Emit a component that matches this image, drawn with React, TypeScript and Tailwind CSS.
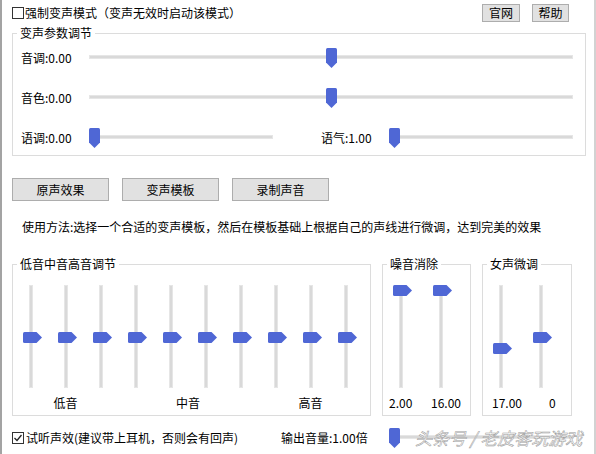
import React from "react";

function HSlider({ className, pos }: { className: string; pos: number }) {
  return (
    <div className={"relative h-[20px] " + className}>
      <div className="absolute left-0 right-0 top-[7px] h-[4px] bg-[#d9d9d9] border border-[#e6e6e6]" />
      <svg
        className="absolute top-0"
        style={{ left: `calc(${pos} * (100% - 11px))` }}
        width="11"
        height="20"
        viewBox="0 0 11 20"
      >
        <path d="M0 1.5 Q0 0 1.5 0 H9.5 Q11 0 11 1.5 V14.5 L5.5 20 L0 14.5 Z" fill="#4f67d5" />
      </svg>
    </div>
  );
}

function VSlider({ width, top }: { width: string; top: number }) {
  return (
    <div className={"relative h-[103px] " + width}>
      <div className="absolute top-0 bottom-0 left-[16px] w-[4px] bg-[#d9d9d9] border border-[#e6e6e6]" />
      <svg
        className="absolute left-[10px]"
        style={{ top }}
        width="19"
        height="11"
        viewBox="0 0 19 11"
      >
        <path d="M0 1.5 Q0 0 1.5 0 H13.5 L19 5.5 L13.5 11 H1.5 Q0 11 0 9.5 Z" fill="#4f67d5" />
      </svg>
    </div>
  );
}

function Group({ title, className, children }: { title: string; className: string; children: React.ReactNode }) {
  return (
    <fieldset className={"border border-[#dcdcdc] p-0 m-0 min-w-0 " + className}>
      <legend className="ml-[4px] px-[3px] text-[12px] leading-[16px]">{title}</legend>
      {children}
    </fieldset>
  );
}

function Btn({ className, children }: { className: string; children: React.ReactNode }) {
  return (
    <div className={"flex items-center justify-center bg-[#e1e1e1] border border-[#adadad] text-[12px] leading-[16px] text-black " + className}>
      {children}
    </div>
  );
}

export default function App() {
  const eq = [47, 47, 47, 47, 47, 47, 47, 47, 47, 47];
  return (
    <div className="w-[596px] h-[454px] bg-white border-l-2 border-l-[#a3a3a3] border-r-2 border-r-[#d2d2d2] relative overflow-hidden font-['Noto_Sans_CJK_SC','Noto_Sans',sans-serif] text-[12px] text-black">
      <div className="pl-[10px]">
        {/* top row */}
        <div className="pt-[4px] flex items-center h-[22px]">
          <div className="w-[12px] h-[12px] border border-[#333333] bg-white" />
          <span className="ml-[1px] leading-[16px]">强制变声模式（变声无效时启动该模式）</span>
          <div className="ml-auto mr-[25px] flex gap-[12px]">
            <Btn className="w-[38px] h-[18px]">官网</Btn>
            <Btn className="w-[37px] h-[18px]">帮助</Btn>
          </div>
        </div>

        {/* param group */}
        <Group title="变声参数调节" className="mt-[3px] w-[574px]">
          <div className="pl-[8px] pr-[11px] pt-[7px] pb-[7px] flex flex-col gap-[20px]">
            <div className="flex items-center">
              <span className="w-[68px] leading-[20px]">音调:0.00</span>
              <HSlider className="w-[484px]" pos={0.5} />
            </div>
            <div className="flex items-center">
              <span className="w-[68px] leading-[20px]">音色:0.00</span>
              <HSlider className="w-[484px]" pos={0.5} />
            </div>
            <div className="flex items-center">
              <span className="w-[68px] leading-[20px]">语调:0.00</span>
              <HSlider className="w-[184px]" pos={0} />
              <span className="ml-[48px] w-[68px] leading-[20px]">语气:1.00</span>
              <HSlider className="w-[184px]" pos={0} />
            </div>
          </div>
        </Group>

        {/* buttons */}
        <div className="mt-[22px] flex gap-[13px]">
          <Btn className="w-[97px] h-[23px]">原声效果</Btn>
          <Btn className="w-[97px] h-[23px]">变声模板</Btn>
          <Btn className="w-[97px] h-[23px]">录制声音</Btn>
        </div>

        <div className="mt-[18px] ml-[10px] leading-[16px]">
          使用方法:选择一个合适的变声模板，然后在模板基础上根据自己的声线进行微调，达到完美的效果
        </div>

        {/* bottom groups */}
        <div className="mt-[21px] flex gap-[11px]">
          <Group title="低音中音高音调节" className="w-[359px]">
            <div className="pt-[13px] pb-[4px]">
              <div className="flex">
                {eq.map((t, i) => (
                  <VSlider key={i} width="w-[35px]" top={t} />
                ))}
              </div>
              <div className="mt-[7px] grid grid-cols-[repeat(10,35px)] leading-[16px]">
                <span className="col-start-2 text-center">低音</span>
                <span className="col-start-5 col-span-2 text-center">中音</span>
                <span className="col-start-9 text-center">高音</span>
              </div>
            </div>
          </Group>

          <Group title="噪音消除" className="w-[89px]">
            <div className="pt-[13px] pb-[4px]">
              <div className="flex">
                <VSlider width="w-[40px]" top={0} />
                <VSlider width="w-[40px]" top={0} />
              </div>
              <div className="mt-[7px] flex leading-[16px]">
                <span className="ml-[6px] w-[42px]">2.00</span>
                <span>16.00</span>
              </div>
            </div>
          </Group>

          <Group title="女声微调" className="w-[90px]">
            <div className="pt-[13px] pb-[4px]">
              <div className="flex">
                <VSlider width="w-[40px]" top={58} />
                <VSlider width="w-[40px]" top={47} />
              </div>
              <div className="mt-[7px] flex leading-[16px]">
                <span className="ml-[9px] w-[57px]">17.00</span>
                <span>0</span>
              </div>
            </div>
          </Group>
        </div>

        {/* bottom row */}
        <div className="mt-[12px] h-[20px] flex items-center">
          <div className="w-[269px] flex items-center">
            <div className="w-[12px] h-[12px] border border-[#333333] bg-white flex items-center justify-center">
              <svg width="10" height="10" viewBox="0 0 10 10">
                <path d="M1.5 5 L4 7.5 L8.5 2" fill="none" stroke="#222" strokeWidth="1.3" />
              </svg>
            </div>
            <span className="ml-[2px] leading-[16px]">试听声效(建议带上耳机，否则会有回声)</span>
          </div>
          <span className="w-[108px] leading-[16px]">输出音量:1.00倍</span>
          <HSlider className="w-[184px]" pos={0} />
        </div>
      </div>

      <div className="absolute left-[413px] top-[426px] text-[17px] leading-[24px] text-white/80 [-webkit-text-stroke:0.5px_#999999] whitespace-nowrap italic">
        头条号 / 老皮客玩游戏
      </div>
    </div>
  );
}
